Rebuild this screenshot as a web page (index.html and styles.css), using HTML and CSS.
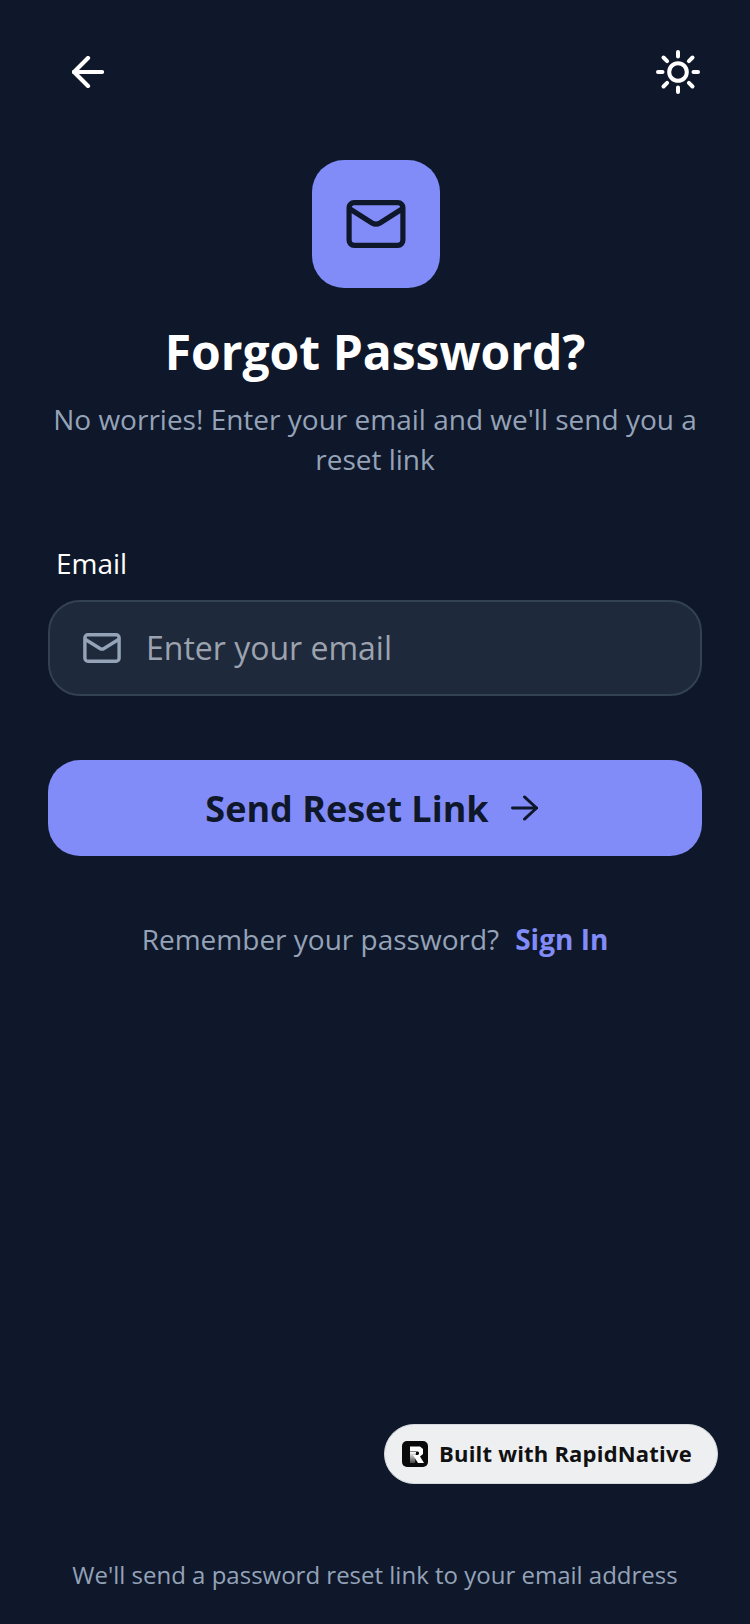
FILE: index.html
```html
<!DOCTYPE html>
<html lang="en">
<head>
<meta charset="utf-8">
<title>Forgot Password</title>
<link rel="stylesheet" href="styles.css">
</head>
<body>
<div class="screen">
  <header class="topbar">
    <svg class="icon-back" viewBox="0 0 32 32" fill="none" stroke="#fff" stroke-width="4.200" stroke-linecap="round" stroke-linejoin="round"><path d="M30 16H2"/><path d="M16 2 2 16l14 14"/></svg>
    <svg class="icon-sun" viewBox="0 0 44 44" fill="none" stroke="#fff" stroke-width="4" stroke-linecap="round"><circle cx="22" cy="22" r="8.800"/><path d="M22 2v4.500M22 37.500V42M2 22h4.500M37.500 22H42M7.500 7.500l3.600 3.600M32.900 32.900l3.600 3.600M7.500 36.500l3.600-3.600M32.900 11.100l3.600-3.600"/></svg>
  </header>
  <div class="logo">
    <svg class="logo-mail" viewBox="0 0 60 50" fill="none" stroke="#0f172a" stroke-width="5.200" stroke-linecap="round" stroke-linejoin="round"><rect x="3.100" y="3.700" width="53.800" height="42.600" rx="5"/><path d="M4 10 26 24q4 2.400 8 0L56 10"/></svg>
  </div>
  <h1 class="title">Forgot Password?</h1>
  <p class="subtitle">No worries! Enter your email and we'll send you a reset link</p>
  <label class="label">Email</label>
  <div class="input">
    <svg class="input-mail" viewBox="0 0 38 30" fill="none" stroke="#94a3b8" stroke-width="3.400" stroke-linecap="round" stroke-linejoin="round"><rect x="1.900" y="1.700" width="34.200" height="26.600" rx="3"/><path d="M2.500 6.500 17 15.500q2 1.200 4 0L35.500 6.500"/></svg>
    <span class="placeholder">Enter your email</span>
  </div>
  <div class="button">
    <span>Send Reset Link</span>
    <svg class="button-arrow" viewBox="0 0 28 26" fill="none" stroke="#0f172a" stroke-width="3" stroke-linecap="round" stroke-linejoin="round"><path d="M1.500 13h25"/><path d="M14 1.500 26.500 13 14 24.500"/></svg>
  </div>
  <p class="remember">Remember your password?<a class="signin">Sign In</a></p>
  <div class="spacer"></div>
  <div class="badge-row">
    <div class="badge">
      <span class="badge-logo"><svg viewBox="0 0 26 26"><defs><linearGradient id="rfade" x1="0" y1="0" x2="0" y2="1"><stop offset="0" stop-color="#fff"/><stop offset="1" stop-color="#444"/></linearGradient></defs><path fill="url(#rfade)" d="M8 11h6l-1 11H8z"/><path fill="#fff" d="M8 5.500h10l3 2.500v5l-3 2.500 4 6.500h-6l-5-8h5l1-1v-1.500l-1-1H8z"/></svg></span>
      <span class="badge-text">Built with RapidNative</span>
    </div>
  </div>
  <p class="footnote">We'll send a password reset link to your email address</p>
</div>
</body>
</html>
```

FILE: styles.css
```css
* { box-sizing: border-box; }
html, body { margin: 0; padding: 0; }
body { width: 750px; height: 1624px; background: #0f172a; font-family: "Open Sans", sans-serif; overflow: hidden; }
.screen { height: 1624px; padding: 50px 48px 0; display: flex; flex-direction: column; }
.topbar { display: flex; justify-content: space-between; align-items: center; height: 44px; padding: 0 2px 0 24px; }
.icon-back { width: 32px; height: 32px; }
.icon-sun { width: 44px; height: 44px; }
.logo { width: 128px; height: 128px; margin: 66px 0 0 264px; border-radius: 32px; background: #818cf8; display: flex; align-items: center; justify-content: center; }
.logo-mail { width: 60px; height: 50px; }
.title { margin: 32px 0 0; font-size: 48px; line-height: 64px; font-weight: 700; color: #fff; text-align: center; }
.subtitle { margin: 15px 0 0; font-size: 28px; line-height: 40px; color: #94a3b8; text-align: center; }
.label { margin: 64px 0 0 8px; font-size: 28px; line-height: 40px; font-weight: 400; color: #fff; }
.input { height: 96px; margin-top: 17px; border: 2px solid #334155; border-radius: 32px; background: #1e293b; display: flex; align-items: center; padding-left: 33px; gap: 25px; }
.input-mail { width: 38px; height: 30px; }
.placeholder { padding-bottom: 2px; font-size: 32px; color: #9ca3af; }
.button { height: 96px; margin-top: 64px; padding-right: 7px; border-radius: 32px; background: #818cf8; display: flex; align-items: center; justify-content: center; gap: 22px; font-size: 36px; font-weight: 700; color: #0f172a; }
.button-arrow { width: 27px; height: 26px; }
.remember { margin: 63px 0 0; font-size: 28px; line-height: 40px; color: #94a3b8; text-align: center; }
.signin { margin-left: 16px; font-weight: 700; color: #818cf8; }
.spacer { flex: 1; }
.badge-row { display: flex; justify-content: flex-end; margin-right: -16px; }
.badge { width: 334px; height: 60px; border-radius: 30px; background: #eeeff1; border: 1px solid #d5d8de; display: flex; align-items: center; padding-left: 17px; gap: 11px; font-size: 22px; letter-spacing: 0.2px; font-weight: 700; color: #111; }
.badge-text { padding-bottom: 2px; }
.badge-logo { width: 26px; height: 26px; border-radius: 5px; background: #0a0a0a; display: flex; }
.footnote { margin: 75px 0 33px; font-size: 24px; line-height: 32px; color: #94a3b8; text-align: center; white-space: nowrap; }
```
